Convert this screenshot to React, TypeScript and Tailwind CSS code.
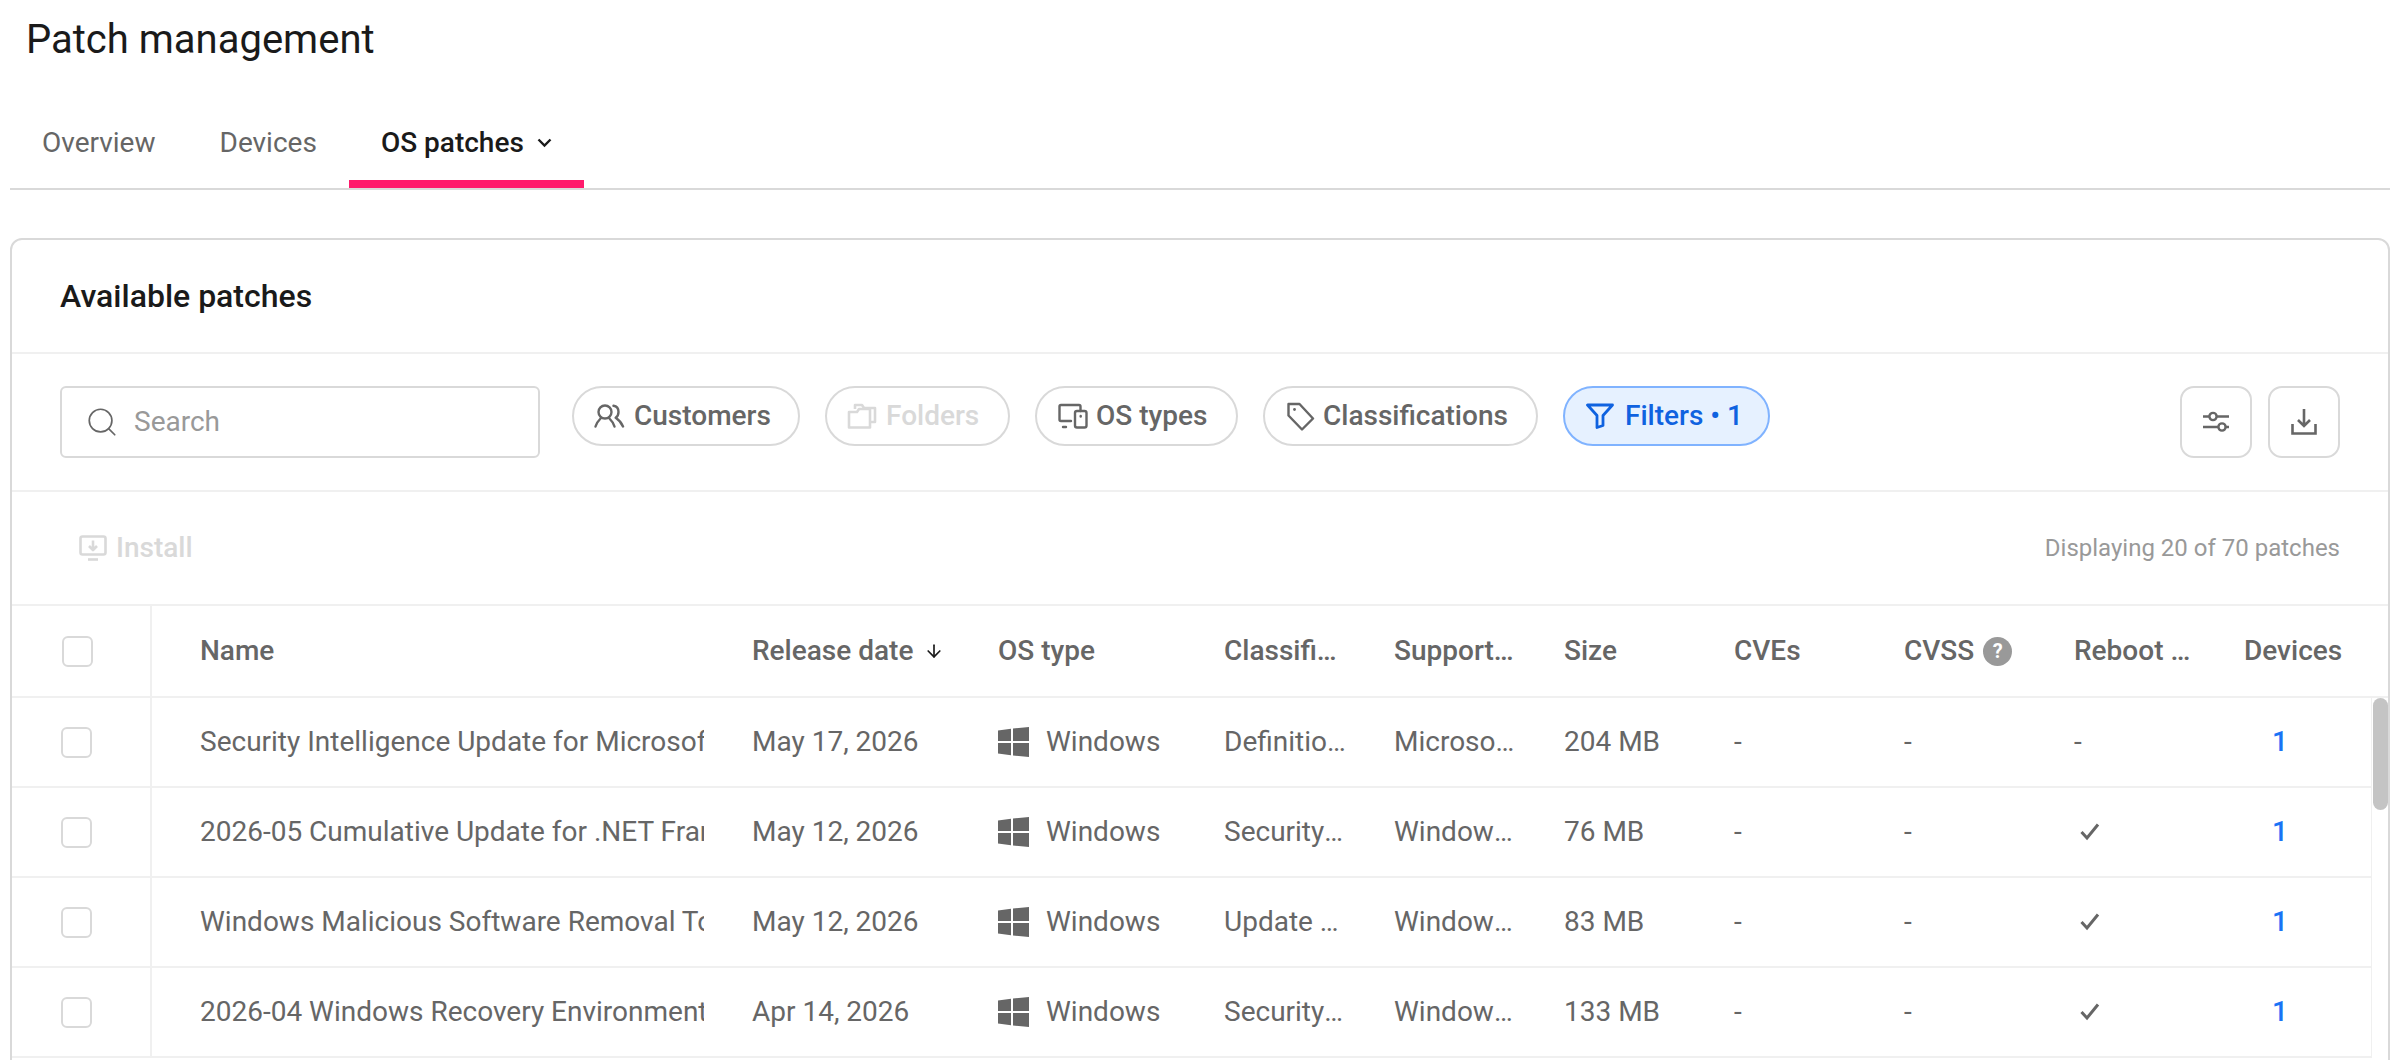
import { ArrowDown, Search } from "lucide-react";
import type { ReactNode } from "react";

const gridCols = "grid grid-cols-[140px_552px_246px_226px_170px_170px_170px_170px_170px_170px_minmax(0,1fr)]";

const CustomersIcon = () => (
  <svg width="32" height="24" viewBox="0 0 32 24" fill="none" stroke="currentColor" strokeWidth="2.4" strokeLinecap="round" strokeLinejoin="round">
    <circle cx="11" cy="8" r="6.5" />
    <path d="M1.5 22.500c1-3.500 3-6 5.500-8.500M20.500 22.500c-1-3.500-3-6-5.500-8.500" />
    <path d="M19.500 1.800c3.200.5 5 3.100 5 6.200 0 2.400-1 4.500-2.800 5.800 3 2 5.800 5 7.300 8.700" />
  </svg>
);

const FoldersIcon = () => (
  <svg width="30" height="26" viewBox="0 0 30 26" fill="none" stroke="currentColor" strokeWidth="2.6" strokeLinejoin="round">
    <path d="M2 9h8l2-3h11v18.500H2z" />
    <path d="M8 6V2h7l2 3h11v14h-5" />
  </svg>
);

const DevicesIcon = () => (
  <svg width="30" height="26" viewBox="0 0 30 26" fill="none" stroke="currentColor" strokeWidth="2.4" strokeLinecap="round" strokeLinejoin="round">
    <path d="M13 18H3a1.500 1.500 0 0 1-1.500-1.500v-13A1.500 1.500 0 0 1 3 2h18a1.500 1.500 0 0 1 1.500 1.500V8" />
    <rect x="17" y="8" width="11.500" height="16.500" rx="2" />
    <path d="M5 24h3" />
    <path d="M22.700 13v.5" />
  </svg>
);

const TagIcon = () => (
  <svg width="28" height="29" viewBox="0 0 28 29" fill="none" stroke="currentColor" strokeWidth="2.4" strokeLinejoin="round">
    <path d="M1.500 2h11l13.500 14.500-11 11L1.500 13.500z" />
    <circle cx="7.500" cy="7.500" r="1.400" fill="currentColor" stroke="none" />
  </svg>
);

const FilterIcon = () => (
  <svg width="28" height="26" viewBox="0 0 28 26" fill="none" stroke="currentColor" strokeWidth="2.8" strokeLinejoin="round">
    <path d="M1.500 2h25L17 12.500v10l-6 2V12.500z" />
  </svg>
);

const SlidersIcon = () => (
  <svg width="26" height="22" viewBox="0 0 26 22" fill="none" stroke="currentColor" strokeWidth="2.400">
    <path d="M0 5.500h6M14 5.500h12M0 16h15M23 16h3" />
    <circle cx="10" cy="5.500" r="3.600" />
    <circle cx="19" cy="16" r="3.600" />
  </svg>
);

const DownloadIcon = () => (
  <svg width="26" height="26" viewBox="0 0 26 26" fill="none" stroke="currentColor" strokeWidth="2.600">
    <path d="M13 0v16M7 11l6 6 6-6" />
    <path d="M1.500 15v9.500h23V15" />
  </svg>
);

const InstallIcon = () => (
  <svg width="28" height="26" viewBox="0 0 28 26" fill="none" stroke="currentColor" strokeWidth="2.600" strokeLinejoin="round">
    <rect x="1.500" y="1.500" width="25" height="18" rx="2" />
    <path d="M14 5.500v9M10 11l4 4 4-4" />
    <path d="M9 24.500h10" />
  </svg>
);

const WindowsIcon = () => (
  <svg width="31" height="30" viewBox="0 0 31 30" fill="#666666" className="shrink-0">
    <path d="M0 3.500 13 1.800V14H0zM15 1.500 31 0v14H15zM0 16h13v12.200L0 26.500zM15 16h16v14l-16-1.500z" />
  </svg>
);

const CheckMark = () => (
  <svg width="20" height="18" viewBox="0 0 20 18" fill="none" stroke="#666666" strokeWidth="3" className="ml-[6px]">
    <path d="M1.500 9l5.500 6L18 1.500" />
  </svg>
);

const TabChevron = () => (
  <svg width="15" height="10" viewBox="0 0 15 10" fill="none" stroke="currentColor" strokeWidth="2.400">
    <path d="M1.500 1.500l6 6 6-6" />
  </svg>
);

type ChipProps = { icon: ReactNode; label: string; className: string };

const Chip = ({ icon, label, className }: ChipProps) => (
  <div className={`flex h-[60px] items-center rounded-full border-2 ${className}`}>
    {icon}
    <span className="whitespace-nowrap text-[28px] font-medium">{label}</span>
  </div>
);

const IconButton = ({ children }: { children: ReactNode }) => (
  <div className="flex h-[72px] w-[72px] items-center justify-center rounded-[14px] border-2 border-[#d9d9d9] text-[#666666]">
    {children}
  </div>
);

const CheckBox = () => <div className="h-[31px] w-[31px] rounded-[6px] border-2 border-[#d9d9d9]" />;

const headers = ["Classification", "Supported products", "Size", "CVEs"];

const rows = [
  {
    name: "Security Intelligence Update for Microsoft Defender Antivirus",
    date: "May 17, 2026",
    classification: "Definition Updates",
    product: "Microsoft Defender",
    size: "204 MB",
    reboot: false,
  },
  {
    name: "2026-05 Cumulative Update for .NET Framework 3.5 and 4.8",
    date: "May 12, 2026",
    classification: "Security Updates",
    product: "Windows 11 Client",
    size: "76 MB",
    reboot: true,
  },
  {
    name: "Windows Malicious Software Removal Tool x64",
    date: "May 12, 2026",
    classification: "Update Rollups",
    product: "Windows 11 Client",
    size: "83 MB",
    reboot: true,
  },
  {
    name: "2026-04 Windows Recovery Environment Update",
    date: "Apr 14, 2026",
    classification: "Security Updates",
    product: "Windows 11 Client",
    size: "133 MB",
    reboot: true,
  },
];

export default function App() {
  return (
    <div className="h-[1060px] w-[2400px] overflow-hidden bg-white font-['Roboto',sans-serif] text-[#666666]">
      <h1 className="flex h-[80px] items-center pl-[26px] text-[40px] font-normal text-[#1a1a1a]">Patch management</h1>

      <div className="mx-[10px] flex h-[110px] items-end border-b-2 border-[#d9d9d9]">
        <div className="flex h-[90px] items-center border-y-8 border-transparent px-[32px] text-[28px]">Overview</div>
        <div className="flex h-[90px] items-center border-y-8 border-transparent px-[32px] text-[28px]">Devices</div>
        <div className="flex h-[90px] items-center gap-[13px] border-y-8 border-t-transparent border-b-[#ff1a6c] px-[32px] text-[28px] font-medium text-[#1a1a1a]">
          OS patches
          <TabChevron />
        </div>
      </div>

      <div className="mx-[10px] mt-[48px] h-[900px] rounded-t-[12px] border-2 border-[#d9d9d9]">
        <div className="flex h-[114px] items-center border-b-2 border-[#f0f0f0] pl-[48px] text-[32px] font-medium text-[#1a1a1a]">
          Available patches
        </div>

        <div className="flex h-[138px] items-start border-b-2 border-[#f0f0f0] pl-[48px] pr-[48px] pt-[32px]">
          <div className="flex h-[72px] w-[480px] items-center gap-[15px] rounded-[6px] border-2 border-[#d9d9d9] pl-[23px] text-[28px] text-[#999999]">
            <Search size={34} strokeWidth={1.2} className="text-[#666666]" />
            Search
          </div>
          <div className="ml-[32px] flex gap-[25px]">
            <Chip icon={<CustomersIcon />} label="Customers" className="w-[228px] gap-[8px] border-[#d9d9d9] pl-[20px]" />
            <Chip icon={<FoldersIcon />} label="Folders" className="w-[185px] gap-[9px] border-[#d9d9d9] pl-[20px] text-[#d9d9d9]" />
            <Chip icon={<DevicesIcon />} label="OS types" className="w-[203px] gap-[8px] border-[#d9d9d9] pl-[21px]" />
            <Chip icon={<TagIcon />} label="Classifications" className="w-[275px] gap-[8px] border-[#d9d9d9] pl-[22px]" />
            <Chip icon={<FilterIcon />} label="Filters • 1" className="w-[207px] gap-[11px] border-[#80b3ff] bg-[#e6f1ff] pl-[21px] text-[#0f62e0]" />
          </div>
          <div className="ml-auto flex gap-[16px]">
            <IconButton>
              <SlidersIcon />
            </IconButton>
            <IconButton>
              <DownloadIcon />
            </IconButton>
          </div>
        </div>

        <div className="flex h-[114px] items-center justify-between border-b-2 border-[#f0f0f0] pl-[67px] pr-[48px]">
          <div className="flex items-center gap-[9px] text-[28px] font-medium text-[#d9d9d9]">
            <InstallIcon />
            Install
          </div>
          <div className="text-[24px] text-[#999999]">Displaying 20 of 70 patches</div>
        </div>

        <div className={`${gridCols} h-[92px] items-stretch border-b-2 border-[#f0f0f0] text-[28px] font-medium`}>
          <div className="flex items-center border-r-2 border-[#f0f0f0] pl-[50px]">
            <CheckBox />
          </div>
          <div className="flex items-center pl-[48px]">Name</div>
          <div className="flex items-center gap-[11px] pl-[48px]">
            Release date
            <ArrowDown size={20} strokeWidth={2} className="text-[#1a1a1a]" />
          </div>
          <div className="flex items-center pl-[48px]">OS type</div>
          {headers.map((header) => (
            <div key={header} className="flex min-w-0 items-center pl-[48px]">
              <span className="truncate">{header}</span>
            </div>
          ))}
          <div className="flex items-center gap-[9px] pl-[48px]">
            CVSS
            <span className="flex h-[29px] w-[29px] shrink-0 items-center justify-center rounded-full bg-[#999999] text-[20px] font-bold text-white">?</span>
          </div>
          <div className="flex min-w-0 items-center pl-[48px]">
            <span className="truncate">Reboot required</span>
          </div>
          <div className="flex items-center pl-[48px]">Devices</div>
        </div>

        <div className="flex">
          <div className="min-w-0 flex-1">
            {rows.map((row) => (
              <div key={row.name} className={`${gridCols} h-[90px] items-stretch border-b-2 border-[#f0f0f0] text-[28px]`}>
                <div className="flex items-center border-r-2 border-[#f0f0f0] pl-[49px]">
                  <CheckBox />
                </div>
                <div className="flex items-center overflow-hidden whitespace-nowrap pl-[48px]">{row.name}</div>
                <div className="flex items-center pl-[48px]">{row.date}</div>
                <div className="flex items-center gap-[17px] pl-[48px]">
                  <WindowsIcon />
                  Windows
                </div>
                <div className="flex min-w-0 items-center pl-[48px]">
                  <span className="truncate">{row.classification}</span>
                </div>
                <div className="flex min-w-0 items-center pl-[48px]">
                  <span className="truncate">{row.product}</span>
                </div>
                <div className="flex items-center pl-[48px]">{row.size}</div>
                <div className="flex items-center pl-[48px]">-</div>
                <div className="flex items-center pl-[48px]">-</div>
                <div className="flex items-center pl-[48px]">
                  {row.reboot ? <CheckMark /> : "-"}
                </div>
                <div className="flex items-center pl-[76px] font-medium text-[#1a73f5]">1</div>
              </div>
            ))}
          </div>
          <div className="w-[17px] border-l border-[#f0f0f0] pl-px">
            <div className="h-[112px] w-[15px] rounded-full bg-[#c4c4c4]" />
          </div>
        </div>
      </div>
    </div>
  );
}
